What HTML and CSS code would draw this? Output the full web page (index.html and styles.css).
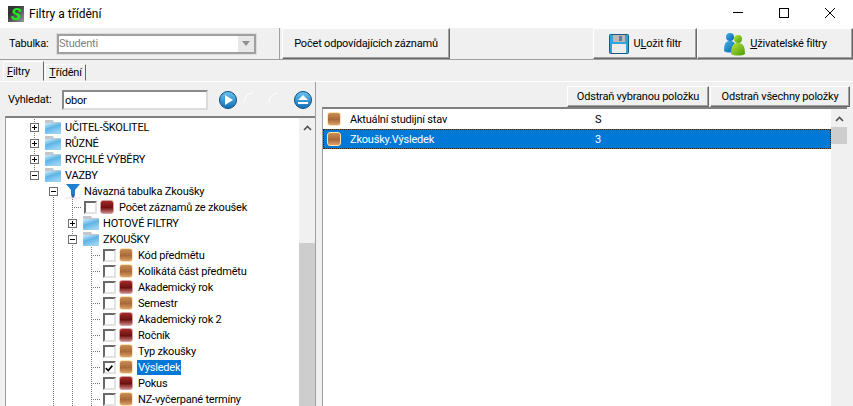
FILE: index.html
```html
<!DOCTYPE html>
<html lang="cs">
<head>
  <meta charset="UTF-8">
  <meta name="viewport" content="width=device-width, initial-scale=1.0">
  <title>Filtry a třídění</title>
  <link rel="stylesheet" href="styles.css">
</head>
<body>
  <svg class="defs" width="0" height="0">
    <defs>
      <linearGradient id="fold" x1="0" y1="0" x2="0.5" y2="1">
        <stop offset="0" stop-color="#d4eefa"/>
        <stop offset="0.5" stop-color="#5fb4e6"/>
        <stop offset="1" stop-color="#9ad4f2"/>
      </linearGradient>
      <linearGradient id="ball" x1="0" y1="0" x2="0" y2="1">
        <stop offset="0" stop-color="#6cc4f0"/>
        <stop offset="1" stop-color="#0f6fb8"/>
      </linearGradient>
      <linearGradient id="blue-man" x1="0" y1="0" x2="1" y2="1">
        <stop offset="0" stop-color="#3fb4ee"/>
        <stop offset="1" stop-color="#0d5f9e"/>
      </linearGradient>
      <linearGradient id="green-man" x1="0" y1="0" x2="1" y2="1">
        <stop offset="0" stop-color="#b5e63c"/>
        <stop offset="1" stop-color="#4a9a08"/>
      </linearGradient>
      <symbol id="folder" viewBox="0 0 16 14">
        <path d="M0 0h8l1 2h7v2H0z" fill="#c4c8cc"/>
        <rect y="3" width="16" height="11" fill="url(#fold)"/>
      </symbol>
    </defs>
  </svg>

  <header class="titlebar">
    <span class="app-icon">S</span>
    <span class="title">Filtry a třídění</span>
    <div class="win-btns">
      <svg width="46" height="28" viewBox="0 0 46 28"><path d="M18 12.5h10" stroke="#000"/></svg>
      <svg width="46" height="28" viewBox="0 0 46 28"><rect x="18.5" y="8.5" width="9" height="9" fill="none" stroke="#000"/></svg>
      <svg width="46" height="28" viewBox="0 0 46 28"><path d="M18 8l10 10M28 8l-10 10" stroke="#000" fill="none"/></svg>
    </div>
  </header>

  <div class="toolbar">
    <div class="table-pick">
      <label>Tabulka:</label>
      <div class="combo">
        <span>Studenti</span>
        <b class="combo-btn"><i></i></b>
      </div>
    </div>
    <button class="btn btn-count">Počet odpovídajících záznamů</button>
    <div class="spacer"></div>
    <button class="btn btn-save">
      <svg width="20" height="20" viewBox="0 0 20 20">
        <rect x="0.5" y="0.5" width="19" height="19" rx="1" fill="#2ea6dc" stroke="#155a80"/>
        <rect x="4" y="1" width="12" height="7" fill="#c4b4b4"/>
        <rect x="10" y="2" width="3" height="5" fill="#5a7f96"/>
        <rect x="3" y="10" width="14" height="9" fill="#ececec"/>
      </svg>
      <span>U<u>L</u>ožit filtr</span>
    </button>
    <button class="btn btn-users">
      <svg width="22" height="24" viewBox="0 0 22 24">
        <circle cx="7" cy="5" r="4" fill="url(#blue-man)"/>
        <path d="M1 19c0-8 2-10 6-10s6 2 6 10c-2 2-10 2-12 0z" fill="url(#blue-man)"/>
        <circle cx="15" cy="7" r="4" fill="url(#green-man)"/>
        <path d="M8 22c0-9 3-11 7-11s7 2 7 11c-3 2-11 2-14 0z" fill="url(#green-man)"/>
      </svg>
      <span><u>U</u>živatelské filtry</span>
    </button>
  </div>

  <nav class="tabs">
    <div class="tab active"><u>F</u>iltry</div>
    <div class="tab"><u>T</u>řídění</div>
  </nav>

  <main class="content">
    <section class="left">
      <div class="search">
        <label>Vyhledat:</label>
        <input class="search-input" type="text" value="obor">
        <svg class="nav-ball first" width="20" height="20" viewBox="0 0 20 20">
          <circle cx="10" cy="10" r="8.5" fill="url(#ball)" stroke="#0c4f80"/>
          <path d="M7 5l8 5-8 5z" fill="#fff"/>
        </svg>
        <svg class="nav-ball" width="20" height="20" viewBox="0 0 20 20"><path d="M1 13a9 9 0 0 1 9-10" fill="none" stroke="#fff"/></svg>
        <svg class="nav-ball" width="20" height="20" viewBox="0 0 20 20"><path d="M1 13a9 9 0 0 1 9-10" fill="none" stroke="#fff"/></svg>
        <svg class="nav-ball last" width="20" height="20" viewBox="0 0 20 20">
          <circle cx="10" cy="10" r="8.5" fill="url(#ball)" stroke="#0c4f80"/>
          <path d="M10 5l5 5H5zM5 12h10v2H5z" fill="#fff"/>
        </svg>
      </div>

      <div class="tree-box">
        <div class="tree">
          <div class="row"><i class="c line"><b class="exp plus"></b></i><svg class="fld"><use href="#folder"/></svg><span class="txt">UČITEL-ŠKOLITEL</span></div>
          <div class="row"><i class="c line"><b class="exp plus"></b></i><svg class="fld"><use href="#folder"/></svg><span class="txt">RŮZNÉ</span></div>
          <div class="row"><i class="c line"><b class="exp plus"></b></i><svg class="fld"><use href="#folder"/></svg><span class="txt">RYCHLÉ VÝBĚRY</span></div>
          <div class="row"><i class="c up"><b class="exp"></b></i><svg class="fld"><use href="#folder"/></svg><span class="txt">VAZBY</span></div>
          <div class="row">
            <i class="c"></i><i class="c down"><b class="exp"></b></i>
            <svg class="funnel" width="16" height="16" viewBox="0 0 16 16">
              <path d="M1 1h14l-5 6v4H6V7z" fill="#1e7fd0"/>
              <path d="M6 11h4l-1 4H7z" fill="#2a5fa8"/>
              <path d="M0 15h16" stroke="#f3d9e6"/>
            </svg>
            <span class="txt">Návazná tabulka Zkoušky</span>
          </div>
          <div class="row"><i class="c"></i><i class="c line"></i><i class="c ell"></i><i class="chk"></i><i class="ico red"></i><span class="txt">Počet záznamů ze zkoušek</span></div>
          <div class="row"><i class="c"></i><i class="c line"></i><i class="c line"><b class="exp plus"></b></i><svg class="fld"><use href="#folder"/></svg><span class="txt">HOTOVÉ FILTRY</span></div>
          <div class="row"><i class="c"></i><i class="c line"></i><i class="c line"><b class="exp"></b></i><svg class="fld"><use href="#folder"/></svg><span class="txt">ZKOUŠKY</span></div>
          <div class="row"><i class="c"></i><i class="c line"></i><i class="c line"></i><i class="c ell"></i><i class="chk"></i><i class="ico tan"></i><span class="txt">Kód předmětu</span></div>
          <div class="row"><i class="c"></i><i class="c line"></i><i class="c line"></i><i class="c ell"></i><i class="chk"></i><i class="ico tan"></i><span class="txt">Kolikátá část předmětu</span></div>
          <div class="row"><i class="c"></i><i class="c line"></i><i class="c line"></i><i class="c ell"></i><i class="chk"></i><i class="ico red"></i><span class="txt">Akademický rok</span></div>
          <div class="row"><i class="c"></i><i class="c line"></i><i class="c line"></i><i class="c ell"></i><i class="chk"></i><i class="ico tan"></i><span class="txt">Semestr</span></div>
          <div class="row"><i class="c"></i><i class="c line"></i><i class="c line"></i><i class="c ell"></i><i class="chk"></i><i class="ico red"></i><span class="txt">Akademický rok 2</span></div>
          <div class="row"><i class="c"></i><i class="c line"></i><i class="c line"></i><i class="c ell"></i><i class="chk"></i><i class="ico red"></i><span class="txt">Ročník</span></div>
          <div class="row"><i class="c"></i><i class="c line"></i><i class="c line"></i><i class="c ell"></i><i class="chk"></i><i class="ico tan"></i><span class="txt">Typ zkoušky</span></div>
          <div class="row"><i class="c"></i><i class="c line"></i><i class="c line"></i><i class="c ell"></i><i class="chk">
            <svg width="11" height="11" viewBox="0 0 11 11"><path d="M1 5l3 3 5-6" fill="none" stroke="#000" stroke-width="2"/></svg>
          </i><i class="ico tan"></i><span class="txt sel">Výsledek</span></div>
          <div class="row"><i class="c"></i><i class="c line"></i><i class="c line"></i><i class="c ell"></i><i class="chk"></i><i class="ico red"></i><span class="txt">Pokus</span></div>
          <div class="row"><i class="c"></i><i class="c line"></i><i class="c line"></i><i class="c ell"></i><i class="chk"></i><i class="ico tan"></i><span class="txt">NZ-vyčerpané termíny</span></div>
        </div>
        <div class="scroll tree-scroll">
          <svg class="arrow" width="9" height="6" viewBox="0 0 9 6"><path d="M1 5l3.5-3.5L8 5" fill="none" stroke="#505050" stroke-width="1.6"/></svg>
          <div class="thumb"></div>
        </div>
      </div>
    </section>

    <div class="splitter"></div>

    <section class="right">
      <div class="right-bar">
        <button class="btn small w-one">Odstraň vybranou položku</button>
        <button class="btn small w-all">Odstraň všechny položky</button>
      </div>
      <div class="list-box">
        <div class="list">
          <div class="item"><i class="ico tan"></i><span class="name">Aktuální studijní stav</span><span class="val">S</span></div>
          <div class="item picked"><i class="ico tan"></i><span class="name">Zkoušky.Výsledek</span><span class="val">3</span></div>
        </div>
        <div class="scroll list-scroll">
          <svg class="arrow" width="9" height="6" viewBox="0 0 9 6"><path d="M1 5l3.5-3.5L8 5" fill="none" stroke="#505050" stroke-width="1.6"/></svg>
          <div class="thumb"></div>
        </div>
      </div>
    </section>
  </main>
</body>
</html>
```

FILE: styles.css
```css
html, body {
  margin: 0;
  height: 100%;
}
body {
  width: 853px;
  height: 406px;
  overflow: hidden;
  background: #f0f0f0;
  color: #000;
  font-family: Roboto, Arial, sans-serif;
  font-size: 11px;
  letter-spacing: -0.2px;
  line-height: 16px;
}
.defs {
  position: absolute;
}
button {
  font: inherit;
  letter-spacing: inherit;
  color: inherit;
  padding: 0;
}

/* titlebar */
.titlebar {
  height: 28px;
  background: #fff;
  display: flex;
  align-items: center;
  padding-left: 8px;
}
.app-icon {
  width: 16px;
  height: 16px;
  margin-right: 5px;
  background: linear-gradient(135deg, #333 30%, #999);
  color: #1eea1e;
  font-weight: bold;
  font-style: italic;
  font-size: 17px;
  line-height: 16px;
  text-align: center;
}
.title {
  font-size: 12px;
  letter-spacing: 0;
  flex: 1;
}
.win-btns {
  display: flex;
}

/* top toolbar */
.toolbar {
  height: 31px;
  border-bottom: 1px solid #a0a0a0;
  display: flex;
}
.table-pick {
  width: 280px;
  display: flex;
  align-items: center;
  padding-left: 9px;
  box-sizing: border-box;
  border-right: 1px solid #a0a0a0;
}
.table-pick label {
  width: 48px;
}
.combo {
  width: 199px;
  height: 20px;
  box-sizing: border-box;
  border: 2px solid #a0a0a0;
  outline: 1px solid #dcdcdc;
  background: #fff;
  color: #808080;
  display: flex;
  align-items: center;
}
.combo span {
  flex: 1;
}
.combo-btn {
  width: 16px;
  height: 16px;
  background: #e8e8e8;
  display: flex;
  align-items: center;
  justify-content: center;
}
.combo-btn i {
  border: 4px solid transparent;
  border-top: 5px solid #909090;
  border-bottom: 0;
}
.btn {
  background: #f0f0f0;
  border: 1px solid;
  border-color: #fff #696969 #696969 #fff;
  box-shadow: inset -1px -1px 0 #a0a0a0;
}
.btn-count {
  width: 168px;
  margin-left: 2px;
}
.spacer {
  flex: 1;
}
.btn-save, .btn-users {
  display: flex;
  align-items: center;
  justify-content: center;
  gap: 5px;
}
.btn-save {
  width: 104px;
}
.btn-users {
  width: 156px;
}

/* tabs */
.tabs {
  height: 21px;
  display: flex;
  padding-left: 3px;
  align-items: flex-end;
  border-bottom: 1px solid #fff;
}
.tab {
  height: 17px;
  width: 41px;
  margin-left: 1px;
  box-sizing: border-box;
  border: 1px solid;
  border-color: #fff #696969 transparent #fff;
  text-align: center;
}
.tab.active {
  height: 20px;
  margin-left: 0;
  padding-left: 3px;
  text-align: left;
  line-height: 20px;
}

/* main panels */
.content {
  display: flex;
  height: 325px;
  padding-left: 5px;
}
.left {
  width: 310px;
  display: flex;
  flex-direction: column;
}
.search {
  height: 34px;
  display: flex;
  align-items: center;
  padding: 2px 0 0 3px;
  box-sizing: border-box;
}
.search label {
  width: 54px;
}
.search-input {
  width: 146px;
  height: 20px;
  box-sizing: border-box;
  padding: 0 1px;
  font: inherit;
  letter-spacing: inherit;
  border: 2px solid #8a8a8a;
  border-right-color: #dcdcdc;
  border-bottom-color: #dcdcdc;
  background: #fff;
}
.nav-ball {
  margin-left: 5px;
}
.nav-ball.first {
  margin-left: 10px;
}
.nav-ball.last {
  margin-left: 5px;
}
.tree-box {
  flex: 1;
  display: flex;
  background: #fff;
  border-top: 2px solid #808080;
  border-left: 1px solid #a0a0a0;
  min-height: 0;
}
.tree {
  flex: 1;
  padding-left: 19px;
  padding-top: 1px;
}
.row {
  height: 16px;
  display: flex;
  align-items: center;
  white-space: nowrap;
}
.c {
  width: 19px;
  height: 16px;
  flex: none;
  display: flex;
  align-items: center;
  justify-content: center;
  background-repeat: no-repeat;
}
.line {
  background-image: repeating-linear-gradient(to bottom, #777 0 1px, transparent 1px 2px);
  background-size: 1px 100%;
  background-position: 9px 0;
}
.up {
  background-image: repeating-linear-gradient(to bottom, #777 0 1px, transparent 1px 2px);
  background-size: 1px 8px;
  background-position: 9px 0;
}
.down {
  background-image: repeating-linear-gradient(to bottom, #777 0 1px, transparent 1px 2px);
  background-size: 1px 8px;
  background-position: 9px 8px;
}
.ell {
  background-image:
    repeating-linear-gradient(to bottom, #777 0 1px, transparent 1px 2px),
    repeating-linear-gradient(to right, #777 0 1px, transparent 1px 2px);
  background-size: 1px 100%, 10px 1px;
  background-position: 9px 0, 9px 8px;
}
.exp {
  width: 9px;
  height: 9px;
  box-sizing: border-box;
  border: 1px solid #6e6e6e;
  background:
    linear-gradient(#000, #000) center / 5px 1px no-repeat,
    #fff;
}
.exp.plus {
  background:
    linear-gradient(#000, #000) center / 5px 1px no-repeat,
    linear-gradient(#000, #000) center / 1px 5px no-repeat,
    #fff;
}
.fld {
  width: 16px;
  height: 14px;
  margin: 0 3px 0 1px;
  flex: none;
}
.funnel {
  margin: 0 2px 0 2px;
  flex: none;
}
.chk {
  width: 13px;
  height: 13px;
  box-sizing: border-box;
  margin-left: 2px;
  border: 2px solid;
  border-color: #696969 #e3e3e3 #e3e3e3 #696969;
  background: #fff;
  flex: none;
  display: flex;
}
.ico {
  width: 14px;
  height: 14px;
  box-sizing: border-box;
  margin: 0 4px 0 3px;
  border-radius: 3px;
  flex: none;
}
.ico.tan {
  border: 1px solid #fbe6b0;
  background: linear-gradient(#c98f55, #a9683a 55%, #dca06a);
}
.ico.red {
  border: 1px solid #d8a0a0;
  background: linear-gradient(#a02a2a, #701010 55%, #c58080);
}
.txt {
  padding: 1px 1px 0;
}
.sel {
  background: #0078d7;
  color: #fff;
  height: 14px;
  line-height: 13px;
}

/* scrollbars */
.scroll {
  width: 16px;
  background: #f0f0f0;
  display: flex;
  flex-direction: column;
  align-items: center;
  flex: none;
}
.arrow {
  margin-top: 7px;
}
.thumb {
  width: 100%;
  background: #cdcdcd;
}
.tree-scroll .thumb {
  margin-top: 112px;
  flex: 1;
}
.list-scroll .thumb {
  margin-top: 5px;
  height: 17px;
}

/* right side */
.splitter {
  width: 7px;
  flex: none;
  border-left: 1px solid #a0a0a0;
  box-sizing: border-box;
}
.right {
  flex: 1;
  display: flex;
  flex-direction: column;
  min-width: 0;
}
.right-bar {
  height: 25px;
  padding-top: 4px;
  box-sizing: border-box;
  display: flex;
  justify-content: flex-end;
  padding-right: 3px;
  gap: 1px;
}
.small {
  height: 21px;
}
.w-one {
  width: 142px;
}
.w-all {
  width: 140px;
}
.list-box {
  flex: 1;
  display: flex;
  background: #fff;
  border-top: 2px solid #808080;
  border-left: 1px solid #a0a0a0;
  margin-right: 6px;
  min-height: 0;
}
.list {
  flex: 1;
}
.item {
  height: 20px;
  display: flex;
  align-items: center;
  box-sizing: border-box;
  border: 1px solid transparent;
}
.item .ico {
  margin: 0 9px 0 3px;
}
.name, .val {
  padding-top: 2px;
}
.name {
  width: 245px;
}
.picked {
  background: #0078d7;
  color: #fff;
  border: 1px dotted #3a2a10;
}
```
